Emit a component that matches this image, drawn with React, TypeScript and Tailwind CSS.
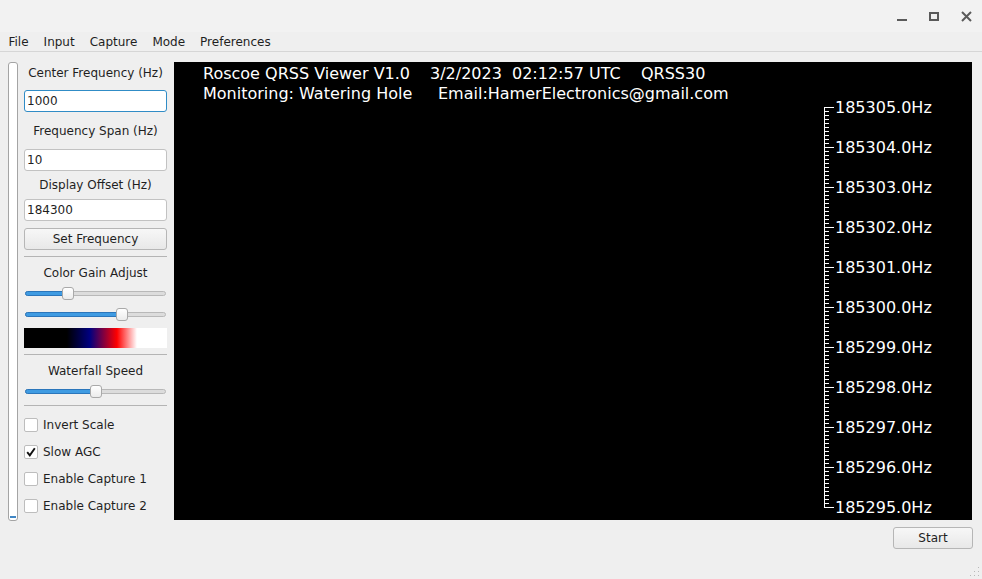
import React from 'react';

const labels = [
  '185305.0Hz',
  '185304.0Hz',
  '185303.0Hz',
  '185302.0Hz',
  '185301.0Hz',
  '185300.0Hz',
  '185299.0Hz',
  '185298.0Hz',
  '185297.0Hz',
  '185296.0Hz',
  '185295.0Hz',
];

function Label({ children, className = '' }: { children: React.ReactNode; className?: string }) {
  return (
    <div className={`h-[22px] flex items-center justify-center ${className}`}>{children}</div>
  );
}

function Field({ value, focused, className = '' }: { value: string; focused?: boolean; className?: string }) {
  return (
    <div
      className={`h-[22px] rounded-[3px] bg-white flex items-center px-[2px] border ${
        focused ? 'border-[#308cc6]' : 'border-[#c2c2c2]'
      } ${className}`}
    >
      {value}
    </div>
  );
}

function Separator({ className = '' }: { className?: string }) {
  return <div className={`h-px bg-[#b4b4b4] ${className}`} />;
}

function HSlider({ handle, className = '' }: { handle: number; className?: string }) {
  return (
    <div className={`relative h-[16px] mx-[1px] ${className}`}>
      <div className="absolute left-0 right-0 top-[6px] h-[5px] rounded-full border border-[#b8b8b8] bg-[#dcdcdc]" />
      <div
        className="absolute left-0 top-[6px] h-[5px] rounded-full border border-[#2b76bb] bg-[#3f9be2]"
        style={{ width: handle + 6 }}
      />
      <div
        className="absolute top-[2px] w-[12px] h-[13px] rounded-[3px] border border-[#a9a9a9] bg-gradient-to-b from-white to-[#ececec]"
        style={{ left: handle }}
      />
    </div>
  );
}

function Check({ label, checked }: { label: string; checked?: boolean }) {
  return (
    <div className="h-[27px] flex items-center">
      <div className="w-[14px] h-[14px] rounded-[2px] border border-[#bdbdbd] bg-white flex items-center justify-center">
        {checked && (
          <svg width="10" height="10" viewBox="0 0 10 10">
            <path d="M1.2 5.2 L3.8 8.4 L8.8 1.2" fill="none" stroke="#111" strokeWidth="1.9" />
          </svg>
        )}
      </div>
      <span className="ml-[5px]">{label}</span>
    </div>
  );
}

function Ruler() {
  const ticks = [];
  for (let i = 0; i <= 100; i++) {
    const y = 45 + i * 4 + 0.5;
    const major = i % 10 === 0;
    ticks.push(<line key={i} x1={650} x2={major ? 660 : 655} y1={y} y2={y} stroke="#fff" strokeWidth="1" />);
  }
  return (
    <svg className="absolute left-0 top-0" width="798" height="458" viewBox="0 0 798 458">
      <line x1={650.5} x2={650.5} y1={45} y2={446} stroke="#fff" strokeWidth="1" />
      {ticks}
      {labels.map((l, i) => (
        <text
          key={l}
          x={661}
          y={45 + i * 40 + 6}
          fill="#fff"
          fontSize="16"
          fontFamily="'DejaVu Sans', sans-serif"
        >
          {l}
        </text>
      ))}
    </svg>
  );
}

export default function App() {
  return (
    <div className="w-[982px] h-[579px] bg-[#efefef] text-[#1f1f1f] text-[12px] font-['DejaVu_Sans',sans-serif] flex flex-col overflow-hidden relative">
      {/* title bar */}
      <div className="h-[32px] bg-[#f2f2f2] flex items-center justify-end">
        <div className="w-[32px] h-[32px] flex items-center justify-center">
          <div className="w-[10px] h-[2px] bg-[#5a5a5a] mt-[7px]" />
        </div>
        <div className="w-[32px] h-[32px] flex items-center justify-center">
          <div className="w-[10px] h-[9px] border-2 border-[#5a5a5a]" />
        </div>
        <div className="w-[32px] h-[32px] flex items-center justify-center">
          <svg width="11" height="11" viewBox="0 0 11 11">
            <path d="M1 1 L10 10 M10 1 L1 10" stroke="#5a5a5a" strokeWidth="2" />
          </svg>
        </div>
      </div>

      {/* menu bar */}
      <div className="h-[20px] flex items-center pl-[1px] border-b border-[#d6d6d6]">
        {['File', 'Input', 'Capture', 'Mode', 'Preferences'].map((m) => (
          <span key={m} className="px-[7.5px]">
            {m}
          </span>
        ))}
      </div>

      {/* content */}
      <div className="mt-[10px] h-[458px] flex">
        <div className="ml-[8px] w-[10px] h-[459px] rounded-[3px] border border-[#a4a4a4] bg-white flex flex-col justify-end pb-[2px]">
          <div className="h-[2px] mx-[1px] bg-[#3f86c4]" />
        </div>

        <div className="ml-[6px] w-[143px] flex flex-col">
          <Label>Center Frequency (Hz)</Label>
          <Field value="1000" focused className="mt-[6px]" />
          <Label className="mt-[8px]">Frequency Span (Hz)</Label>
          <Field value="10" className="mt-[7px]" />
          <Label className="mt-[3px]">Display Offset (Hz)</Label>
          <Field value="184300" className="mt-[3px]" />
          <div className="mt-[7px] h-[22px] rounded-[3px] border border-[#b6b6b6] bg-gradient-to-b from-[#f7f7f7] to-[#e8e8e8] flex items-center justify-center">
            Set Frequency
          </div>
          <Separator className="mt-[6px]" />
          <Label className="mt-[5px]">Color Gain Adjust</Label>
          <HSlider handle={37} className="mt-[1px]" />
          <HSlider handle={91} className="mt-[5px]" />
          <div className="mt-[6px] h-[20px] bg-[linear-gradient(to_right,#000_30%,#000080_46%,#ff0000_65%,#fff_79%)]" />
          <Separator className="mt-[6px]" />
          <Label className="mt-[5px]">Waterfall Speed</Label>
          <HSlider handle={65} className="mt-[1px]" />
          <Separator className="mt-[6px]" />
          <div className="mt-[5px] flex flex-col">
            <Check label="Invert Scale" />
            <Check label="Slow AGC" checked />
            <Check label="Enable Capture 1" />
            <Check label="Enable Capture 2" />
          </div>
        </div>

        <div className="ml-[7px] w-[798px] bg-black relative text-white text-[16px] leading-[20px] pt-[2px] pl-[29px]">
          <div className="flex whitespace-nowrap">
            <span className="w-[227px]">Roscoe QRSS Viewer V1.0</span>
            <span className="w-[82px]">3/2/2023</span>
            <span className="w-[129px]">02:12:57 UTC</span>
            <span>QRSS30</span>
          </div>
          <div className="flex whitespace-nowrap">
            <span className="w-[235px]">Monitoring: Watering Hole</span>
            <span>Email:HamerElectronics@gmail.com</span>
          </div>
          <Ruler />
        </div>
      </div>

      {/* bottom */}
      <div className="mt-[7px] flex justify-end pr-[9px]">
        <div className="w-[80px] h-[22px] rounded-[3px] border border-[#b6b6b6] bg-gradient-to-b from-[#f7f7f7] to-[#e8e8e8] flex items-center justify-center">
          Start
        </div>
      </div>

      <svg className="absolute right-[2px] bottom-[2px]" width="12" height="12" viewBox="0 0 12 12">
        {[
          [10, 2],
          [10, 6],
          [6, 6],
          [10, 10],
          [6, 10],
          [2, 10],
        ].map(([x, y], i) => (
          <rect key={i} x={x} y={y} width="1" height="1" fill="#b8b8b8" />
        ))}
      </svg>
    </div>
  );
}
